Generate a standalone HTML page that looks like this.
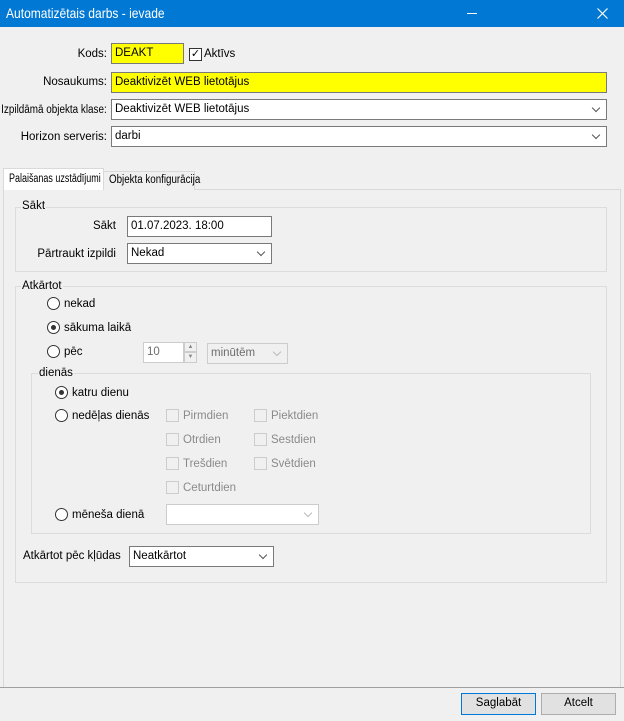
<!DOCTYPE html><html><head><style>
*{box-sizing:border-box;margin:0;padding:0}
body{width:624px;height:721px;background:#f0f0f0;font-family:"Liberation Sans",sans-serif;font-size:11.5px;color:#000;position:relative;overflow:hidden}
div{white-space:nowrap}
.a{position:absolute}
.t{position:absolute;line-height:14px}
.in{position:absolute;background:#fff;border:1px solid #7a7a7a;padding:2px 3px;line-height:14px}
.y{background:#ffff00}
.cb::after{content:"";position:absolute;right:7px;top:5px;width:5px;height:5px;border-right:1px solid #555;border-bottom:1px solid #555;transform:rotate(45deg)}
.dis{border-color:#ccc;color:#6d6d6d}
.dis.cb::after{border-color:#bbb}
.g{position:absolute;border:1px solid #dcdcdc}
.gl{position:absolute;background:#f0f0f0;padding:0 1px;line-height:12px}
.r{position:absolute;width:13px;height:13px;border:1px solid #333;border-radius:50%;background:#fff}
.r.on::after{content:"";position:absolute;left:3px;top:3px;width:5px;height:5px;border-radius:50%;background:#333}
.c{position:absolute;width:13px;height:13px;border:1px solid #ccc;background:#f0f0f0}
.gr{color:#8a8a8a}
.btn{position:absolute;border:1px solid #adadad;background:#e1e1e1;text-align:center;line-height:19px}
.sx{display:inline-block;transform:scaleX(0.85);transform-origin:0 0}
</style></head><body>
<div class="a" style="left:0;top:0;width:624px;height:27px;background:#0078d4"></div>
<div class="a" style="left:6px;top:5px;color:#fff;font-size:14px;transform:scaleX(0.86);transform-origin:0 0">Automatizētais darbs - ievade</div>
<div class="a" style="left:467px;top:13px;width:10px;height:1px;background:#fff"></div>
<svg class="a" style="left:597px;top:8px" width="11" height="11"><path d="M0.5 0.5L10.5 10.5M10.5 0.5L0.5 10.5" stroke="#fff" stroke-width="1.2"/></svg>

<div class="t" style="right:517px;top:47px">Kods:</div>
<div class="in y" style="left:111px;top:43px;width:73px;height:21px">DEAKT</div>
<div class="a" style="left:189px;top:48px;width:13px;height:13px;border:1px solid #333;background:#fff;font-size:11px;line-height:11px;text-align:center">✓</div>
<div class="t" style="left:204px;top:47px">Aktīvs</div>
<div class="t" style="right:517px;top:75px">Nosaukums:</div>
<div class="in y" style="left:111px;top:72px;width:496px;height:21px">Deaktivizēt WEB lietotājus</div>
<div class="t" style="right:517px;top:103px;transform:scaleX(0.86);transform-origin:100% 0">Izpildāmā objekta klase:</div>
<div class="in cb" style="left:111px;top:99px;width:496px;height:21px">Deaktivizēt WEB lietotājus</div>
<div class="t" style="right:517px;top:130px">Horizon serveris:</div>
<div class="in cb" style="left:111px;top:126px;width:496px;height:21px">darbi</div>

<div class="a" style="left:3px;top:189px;width:618px;height:499px;border:1px solid #d9d9d9;background:#f0f0f0;box-shadow:inset -1px -1px 0 #fff"></div>
<div class="a" style="left:103px;top:171px;width:92px;height:19px;border:1px solid #d9d9d9;border-bottom:none;background:#f0f0f0;padding:2px 0 0 5px"><span class="sx">Objekta konfigurācija</span></div>
<div class="a" style="left:3px;top:168px;width:101px;height:22px;border:1px solid #d9d9d9;border-bottom:none;background:#fff;padding:4px 0 0 5px;overflow:hidden"><span class="sx" style="transform:scaleX(0.78)">Palaišanas uzstādījumi</span></div>
<div class="a" style="left:4px;top:190px;width:616px;height:497px;background:#f0f0f0"></div>

<div class="g" style="left:15px;top:207px;width:592px;height:65px"></div>
<div class="gl" style="left:21px;top:200px">Sākt</div>
<div class="t" style="right:508px;top:219px">Sākt</div>
<div class="in" style="left:127px;top:216px;width:145px;height:21px">01.07.2023. 18:00</div>
<div class="t" style="right:508px;top:247px">Pārtraukt izpildi</div>
<div class="in cb" style="left:127px;top:243px;width:145px;height:21px">Nekad</div>

<div class="g" style="left:15px;top:286px;width:592px;height:297px"></div>
<div class="gl" style="left:21px;top:280px">Atkārtot</div>
<div class="r" style="left:47px;top:297px"></div><div class="t" style="left:64px;top:297px">nekad</div>
<div class="r on" style="left:47px;top:321px"></div><div class="t" style="left:64px;top:321px">sākuma laikā</div>
<div class="r" style="left:47px;top:345px"></div><div class="t" style="left:64px;top:345px">pēc</div>
<div class="in dis" style="left:143px;top:342px;width:41px;height:21px">10</div>
<div class="a" style="left:184px;top:342px;width:13px;height:10px;border:1px solid #ccc;background:#f0f0f0;font-size:6px;line-height:8px;text-align:center;color:#888">▲</div>
<div class="a" style="left:184px;top:352px;width:13px;height:11px;border:1px solid #ccc;background:#f0f0f0;font-size:6px;line-height:9px;text-align:center;color:#888">▼</div>
<div class="in dis cb" style="left:207px;top:343px;width:81px;height:21px;background:#f0f0f0">minūtēm</div>

<div class="g" style="left:31px;top:373px;width:560px;height:161px"></div>
<div class="gl" style="left:38px;top:367px">dienās</div>
<div class="r on" style="left:55px;top:386px"></div><div class="t" style="left:72px;top:386px">katru dienu</div>
<div class="r" style="left:55px;top:409px"></div><div class="t" style="left:72px;top:409px">nedēļas dienās</div>
<div class="c" style="left:166px;top:409px"></div><div class="t gr" style="left:183px;top:409px">Pirmdien</div>
<div class="c" style="left:254px;top:409px"></div><div class="t gr" style="left:271px;top:409px">Piektdien</div>
<div class="c" style="left:166px;top:433px"></div><div class="t gr" style="left:183px;top:433px">Otrdien</div>
<div class="c" style="left:254px;top:433px"></div><div class="t gr" style="left:271px;top:433px">Sestdien</div>
<div class="c" style="left:166px;top:457px"></div><div class="t gr" style="left:183px;top:457px">Trešdien</div>
<div class="c" style="left:254px;top:457px"></div><div class="t gr" style="left:271px;top:457px">Svētdien</div>
<div class="c" style="left:166px;top:481px"></div><div class="t gr" style="left:183px;top:481px">Ceturtdien</div>
<div class="r" style="left:55px;top:508px"></div><div class="t" style="left:72px;top:508px">mēneša dienā</div>
<div class="in dis cb" style="left:166px;top:504px;width:153px;height:21px"></div>

<div class="t" style="left:23px;top:549px">Atkārtot pēc kļūdas</div>
<div class="in cb" style="left:129px;top:546px;width:145px;height:21px">Neatkārtot</div>

<div class="a" style="left:0;top:687px;width:624px;height:1px;background:#a0a0a0"></div>
<div class="btn" style="left:461px;top:693px;width:75px;height:22px;border-color:#0078d7">Saglabāt</div>
<div class="btn" style="left:541px;top:693px;width:75px;height:22px">Atcelt</div>
</body></html>
